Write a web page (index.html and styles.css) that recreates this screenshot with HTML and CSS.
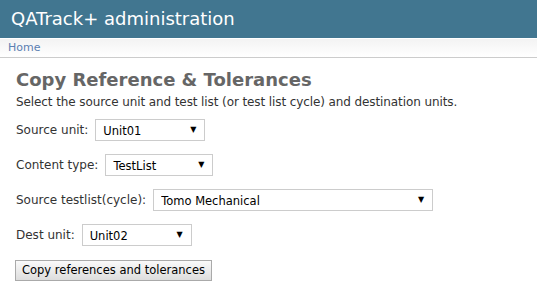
FILE: index.html
```html
<!DOCTYPE html>
<html lang="en">
<head>
  <meta charset="UTF-8" />
  <title>Copy Reference &amp; Tolerances | QATrack+ administration</title>
  <link rel="stylesheet" href="styles.css">
</head>
<body>
  <div id="header">QATrack+ administration</div>
  <div class="breadcrumbs"><a href="#">Home</a></div>

  <div id="content">
    <h1>Copy Reference &amp; Tolerances</h1>
    <p class="help">Select the source unit and test list (or test list cycle) and destination units.</p>

    <form>
      <p class="row">
        <label for="source_unit">Source unit:</label>
        <span class="select w-unit"><select id="source_unit"><option>Unit01</option><option>Unit02</option></select></span>
      </p>
      <p class="row">
        <label for="content_type">Content type:</label>
        <span class="select w-type"><select id="content_type"><option>TestList</option><option>TestListCycle</option></select></span>
      </p>
      <p class="row">
        <label for="testlist">Source testlist(cycle):</label>
        <span class="select w-list"><select id="testlist"><option>Tomo Mechanical</option></select></span>
      </p>
      <p class="row">
        <label for="dest_unit">Dest unit:</label>
        <span class="select w-unit"><select id="dest_unit"><option>Unit02</option><option>Unit01</option></select></span>
      </p>
      <p class="row">
        <button type="submit">Copy references and tolerances</button>
      </p>
    </form>
  </div>
</body>
</html>
```

FILE: styles.css
```css
body {
  margin: 0;
  font-family: "DejaVu Sans", Verdana, sans-serif;
  font-size: 12px;
  color: #333;
  background: #fff;
}

#header {
  background: #417690;
  color: #fff;
  font-size: 18px;
  line-height: 38px;
  height: 38px;
  padding: 0 11px;
}

.breadcrumbs {
  box-sizing: border-box;
  height: 20px;
  line-height: 18px;
  padding: 0 8px;
  font-size: 11px;
  border-top: 1px solid #fff;
  border-bottom: 1px solid #ccc;
  background: linear-gradient(#f3f3f3, #fff);
}

.breadcrumbs a {
  color: #5b80b2;
  text-decoration: none;
}

#content {
  padding: 0 16px;
}

h1 {
  margin: 10px 0 0;
  font-size: 18px;
  line-height: 24px;
  color: #666;
}

.help {
  margin: 2px 0 9px;
  font-size: 12px;
  line-height: 16px;
  letter-spacing: -0.1px;
}

.row {
  margin: 0 0 13px;
  display: flex;
  align-items: center;
  gap: 7px;
  height: 22px;
}

.select {
  position: relative;
  display: inline-block;
}

.select select {
  appearance: none;
  -webkit-appearance: none;
  width: 100%;
  height: 22px;
  padding: 1px 20px 0 7px;
  border: 1px solid #ccc;
  background: #fff;
  font-family: "DejaVu Sans", Verdana, sans-serif;
  font-size: 11.5px;
  color: #000;
  border-radius: 0;
}

/* dropdown arrow */
.select::after {
  content: "\25BC";
  position: absolute;
  right: 9px;
  top: 6px;
  font-size: 8px;
  color: #000;
  pointer-events: none;
}

.w-unit { width: 110px; }
.w-type { width: 108px; }
.w-list { width: 280px; }

button {
  margin-left: -1px;
  height: 21px;
  padding: 0 6px;
  font-family: "DejaVu Sans", Verdana, sans-serif;
  font-size: 11.5px;
  color: #000;
  border: 1px solid #aaa;
  border-radius: 0;
  background: linear-gradient(#fafafa, #ddd);
  cursor: pointer;
}
```
